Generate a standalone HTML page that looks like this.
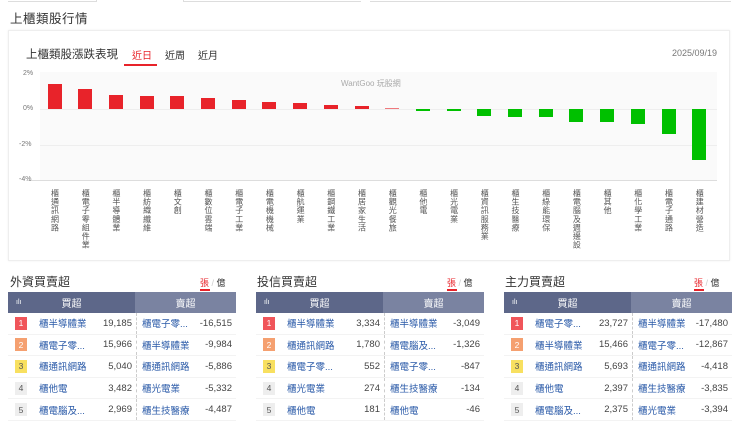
<!DOCTYPE html><html><head><meta charset="utf-8"><style>
*{margin:0;padding:0;box-sizing:border-box}
body{width:740px;height:421px;overflow:hidden;background:#fff;font-family:"Liberation Sans","Noto Sans CJK TC",sans-serif;color:#333;position:relative}
.a{position:absolute}
.bar{position:absolute;width:14px}
.r{background:#e8232a}.g{background:#00c000}
.lab{position:absolute;top:189px;width:12px;font-size:8px;line-height:12px;letter-spacing:0.6px;color:#555;writing-mode:vertical-rl;text-orientation:upright}
.pt{position:absolute;font-size:12px;color:#333}
.tb{position:absolute;width:228px;top:292px}
.hd{height:21px;display:flex;font-size:10px;color:#fff}
.hd div{display:flex;align-items:center;justify-content:center}
.row{height:21.6px;display:flex;align-items:center;font-size:9.5px;border-bottom:1px solid #f3f3f3}
.rk{width:12px;height:13px;margin:0 12px 0 7px;font-size:8.5px;display:flex;align-items:center;justify-content:center;color:#fff}
.nm{color:#2a5aa8;width:58px;white-space:nowrap;overflow:hidden}
.v{width:39px;text-align:right;color:#444;padding-right:4px}
.n2{color:#2a5aa8;width:58px;padding-left:5px;border-left:1px dashed #ccc;height:100%;display:flex;align-items:center;white-space:nowrap;overflow:hidden}
.v2{flex:1;text-align:right;color:#444;padding-right:4px}
</style></head><body>
<div class="a" style="left:8px;top:0;width:89px;height:2px;border-bottom:1px solid #ddd;border-right:1px solid #ddd"></div>
<div class="a" style="left:183px;top:0;width:178px;height:2px;border-bottom:1px solid #ddd;border-left:1px solid #ddd"></div>
<div class="a" style="left:370px;top:0;width:361px;height:2px;border-bottom:1px solid #ddd"></div>
<div class="a" style="left:10px;top:8px;font-size:12.5px;color:#333;letter-spacing:0.5px">上櫃類股行情</div>
<div class="a" style="left:8px;top:30px;width:722px;height:231px;border:1px solid #eee;box-shadow:0 0 2px #eee"></div>
<div class="a" style="left:26px;top:46px;font-size:11.5px;color:#333">上櫃類股漲跌表現</div>
<div class="a" style="left:132px;top:47px;font-size:10px;color:#e8232a">近日</div>
<div class="a" style="left:124px;top:64px;width:33px;height:2px;background:#e8232a"></div>
<div class="a" style="left:165px;top:47px;font-size:10px">近周</div>
<div class="a" style="left:198px;top:47px;font-size:10px">近月</div>
<div class="a" style="left:672px;top:48px;font-size:9px;color:#777">2025/09/19</div>
<div class="a" style="left:40px;top:72px;width:677px;height:108px;background:#fafafa"></div>
<div class="a" style="left:40px;top:109px;width:677px;height:1px;background:#eee"></div>
<div class="a" style="left:40px;top:145px;width:677px;height:1px;background:#eee"></div>
<div class="a" style="left:28px;top:180px;width:689px;height:1px;background:#ddd"></div>
<div class="a" style="left:23px;top:70px;font-size:7px;color:#777">2%</div>
<div class="a" style="left:23px;top:105px;font-size:7px;color:#777">0%</div>
<div class="a" style="left:19px;top:141px;font-size:7px;color:#777">-2%</div>
<div class="a" style="left:19px;top:176px;font-size:7px;color:#777">-4%</div>
<div class="a" style="left:341px;top:78px;font-size:8px;color:#aaa">WantGoo 玩股網</div>
<div class="bar r" style="left:47.5px;top:84px;height:25px"></div>
<div class="bar r" style="left:78.2px;top:89px;height:20px"></div>
<div class="bar r" style="left:108.9px;top:95px;height:14px"></div>
<div class="bar r" style="left:139.6px;top:96px;height:13px"></div>
<div class="bar r" style="left:170.3px;top:96px;height:13px"></div>
<div class="bar r" style="left:201px;top:98px;height:11px"></div>
<div class="bar r" style="left:231.7px;top:100px;height:9px"></div>
<div class="bar r" style="left:262.4px;top:102px;height:7px"></div>
<div class="bar r" style="left:293.1px;top:103px;height:6px"></div>
<div class="bar r" style="left:323.8px;top:105px;height:4px"></div>
<div class="bar r" style="left:354.5px;top:106px;height:3px"></div>
<div class="bar r" style="left:385.2px;top:108px;height:1px;opacity:.6"></div>
<div class="bar g" style="left:415.9px;top:109px;height:2px"></div>
<div class="bar g" style="left:446.6px;top:109px;height:2px"></div>
<div class="bar g" style="left:477.3px;top:109px;height:7px"></div>
<div class="bar g" style="left:508px;top:109px;height:8px"></div>
<div class="bar g" style="left:538.7px;top:109px;height:8px"></div>
<div class="bar g" style="left:569.4px;top:109px;height:13px"></div>
<div class="bar g" style="left:600.1px;top:109px;height:13px"></div>
<div class="bar g" style="left:630.8px;top:109px;height:15px"></div>
<div class="bar g" style="left:661.5px;top:109px;height:25px"></div>
<div class="bar g" style="left:692.2px;top:109px;height:51px"></div>
<div class="lab" style="left:48.5px">櫃通訊網路</div>
<div class="lab" style="left:79.2px">櫃電子零組件業</div>
<div class="lab" style="left:109.9px">櫃半導體業</div>
<div class="lab" style="left:140.6px">櫃紡織纖維</div>
<div class="lab" style="left:171.3px">櫃文創</div>
<div class="lab" style="left:202px">櫃數位雲端</div>
<div class="lab" style="left:232.7px">櫃電子工業</div>
<div class="lab" style="left:263.4px">櫃電機機械</div>
<div class="lab" style="left:294.1px">櫃航運業</div>
<div class="lab" style="left:324.8px">櫃鋼鐵工業</div>
<div class="lab" style="left:355.5px">櫃居家生活</div>
<div class="lab" style="left:386.2px">櫃觀光餐旅</div>
<div class="lab" style="left:416.9px">櫃他電</div>
<div class="lab" style="left:447.6px">櫃光電業</div>
<div class="lab" style="left:478.3px">櫃資訊服務業</div>
<div class="lab" style="left:509px">櫃生技醫療</div>
<div class="lab" style="left:539.7px">櫃綠能環保</div>
<div class="lab" style="left:570.4px">櫃電腦及週邊設</div>
<div class="lab" style="left:601.1px">櫃其他</div>
<div class="lab" style="left:631.8px">櫃化學工業</div>
<div class="lab" style="left:662.5px">櫃電子通路</div>
<div class="lab" style="left:693.2px">櫃建材營造</div>

<div class="pt" style="left:10px;top:273px">外資買賣超</div>
<div class="pt" style="left:257px;top:273px">投信買賣超</div>
<div class="pt" style="left:505px;top:273px">主力買賣超</div>
<div class="a" style="left:200px;top:276px;font-size:9px;color:#e8232a">張 <span style="color:#ccc">/</span> <span style="color:#333">億</span></div>
<div class="a" style="left:200px;top:289px;width:10px;height:2px;background:#e8232a"></div>
<div class="a" style="left:447px;top:276px;font-size:9px;color:#e8232a">張 <span style="color:#ccc">/</span> <span style="color:#333">億</span></div>
<div class="a" style="left:447px;top:289px;width:10px;height:2px;background:#e8232a"></div>
<div class="a" style="left:694px;top:276px;font-size:9px;color:#e8232a">張 <span style="color:#ccc">/</span> <span style="color:#333">億</span></div>
<div class="a" style="left:694px;top:289px;width:10px;height:2px;background:#e8232a"></div>

<div class="tb" style="left:8px">
<div class="hd"><div style="width:127px;background:#5d6789;position:relative"><span style="position:absolute;left:8px;font-size:7px">ılı</span>買超</div><div style="flex:1;background:#7a83a1">賣超</div></div>
<div class="row"><div class="rk" style="background:#f0555a">1</div><div class="nm">櫃半導體業</div><div class="v">19,185</div><div class="n2">櫃電子零...</div><div class="v2">-16,515</div></div>
<div class="row"><div class="rk" style="background:#f5a070">2</div><div class="nm">櫃電子零...</div><div class="v">15,966</div><div class="n2">櫃半導體業</div><div class="v2">-9,984</div></div>
<div class="row"><div class="rk" style="background:#f8e060;color:#555">3</div><div class="nm">櫃通訊網路</div><div class="v">5,040</div><div class="n2">櫃通訊網路</div><div class="v2">-5,886</div></div>
<div class="row"><div class="rk" style="background:#eee;color:#555">4</div><div class="nm">櫃他電</div><div class="v">3,482</div><div class="n2">櫃光電業</div><div class="v2">-5,332</div></div>
<div class="row"><div class="rk" style="background:#eee;color:#555">5</div><div class="nm">櫃電腦及...</div><div class="v">2,969</div><div class="n2">櫃生技醫療</div><div class="v2">-4,487</div></div>
</div>
<div class="tb" style="left:256px">
<div class="hd"><div style="width:127px;background:#5d6789;position:relative"><span style="position:absolute;left:8px;font-size:7px">ılı</span>買超</div><div style="flex:1;background:#7a83a1">賣超</div></div>
<div class="row"><div class="rk" style="background:#f0555a">1</div><div class="nm">櫃半導體業</div><div class="v">3,334</div><div class="n2">櫃半導體業</div><div class="v2">-3,049</div></div>
<div class="row"><div class="rk" style="background:#f5a070">2</div><div class="nm">櫃通訊網路</div><div class="v">1,780</div><div class="n2">櫃電腦及...</div><div class="v2">-1,326</div></div>
<div class="row"><div class="rk" style="background:#f8e060;color:#555">3</div><div class="nm">櫃電子零...</div><div class="v">552</div><div class="n2">櫃電子零...</div><div class="v2">-847</div></div>
<div class="row"><div class="rk" style="background:#eee;color:#555">4</div><div class="nm">櫃光電業</div><div class="v">274</div><div class="n2">櫃生技醫療</div><div class="v2">-134</div></div>
<div class="row"><div class="rk" style="background:#eee;color:#555">5</div><div class="nm">櫃他電</div><div class="v">181</div><div class="n2">櫃他電</div><div class="v2">-46</div></div>
</div>
<div class="tb" style="left:504px">
<div class="hd"><div style="width:127px;background:#5d6789;position:relative"><span style="position:absolute;left:8px;font-size:7px">ılı</span>買超</div><div style="flex:1;background:#7a83a1">賣超</div></div>
<div class="row"><div class="rk" style="background:#f0555a">1</div><div class="nm">櫃電子零...</div><div class="v">23,727</div><div class="n2">櫃半導體業</div><div class="v2">-17,480</div></div>
<div class="row"><div class="rk" style="background:#f5a070">2</div><div class="nm">櫃半導體業</div><div class="v">15,466</div><div class="n2">櫃電子零...</div><div class="v2">-12,867</div></div>
<div class="row"><div class="rk" style="background:#f8e060;color:#555">3</div><div class="nm">櫃通訊網路</div><div class="v">5,693</div><div class="n2">櫃通訊網路</div><div class="v2">-4,418</div></div>
<div class="row"><div class="rk" style="background:#eee;color:#555">4</div><div class="nm">櫃他電</div><div class="v">2,397</div><div class="n2">櫃生技醫療</div><div class="v2">-3,835</div></div>
<div class="row"><div class="rk" style="background:#eee;color:#555">5</div><div class="nm">櫃電腦及...</div><div class="v">2,375</div><div class="n2">櫃光電業</div><div class="v2">-3,394</div></div>
</div>
</body></html>
